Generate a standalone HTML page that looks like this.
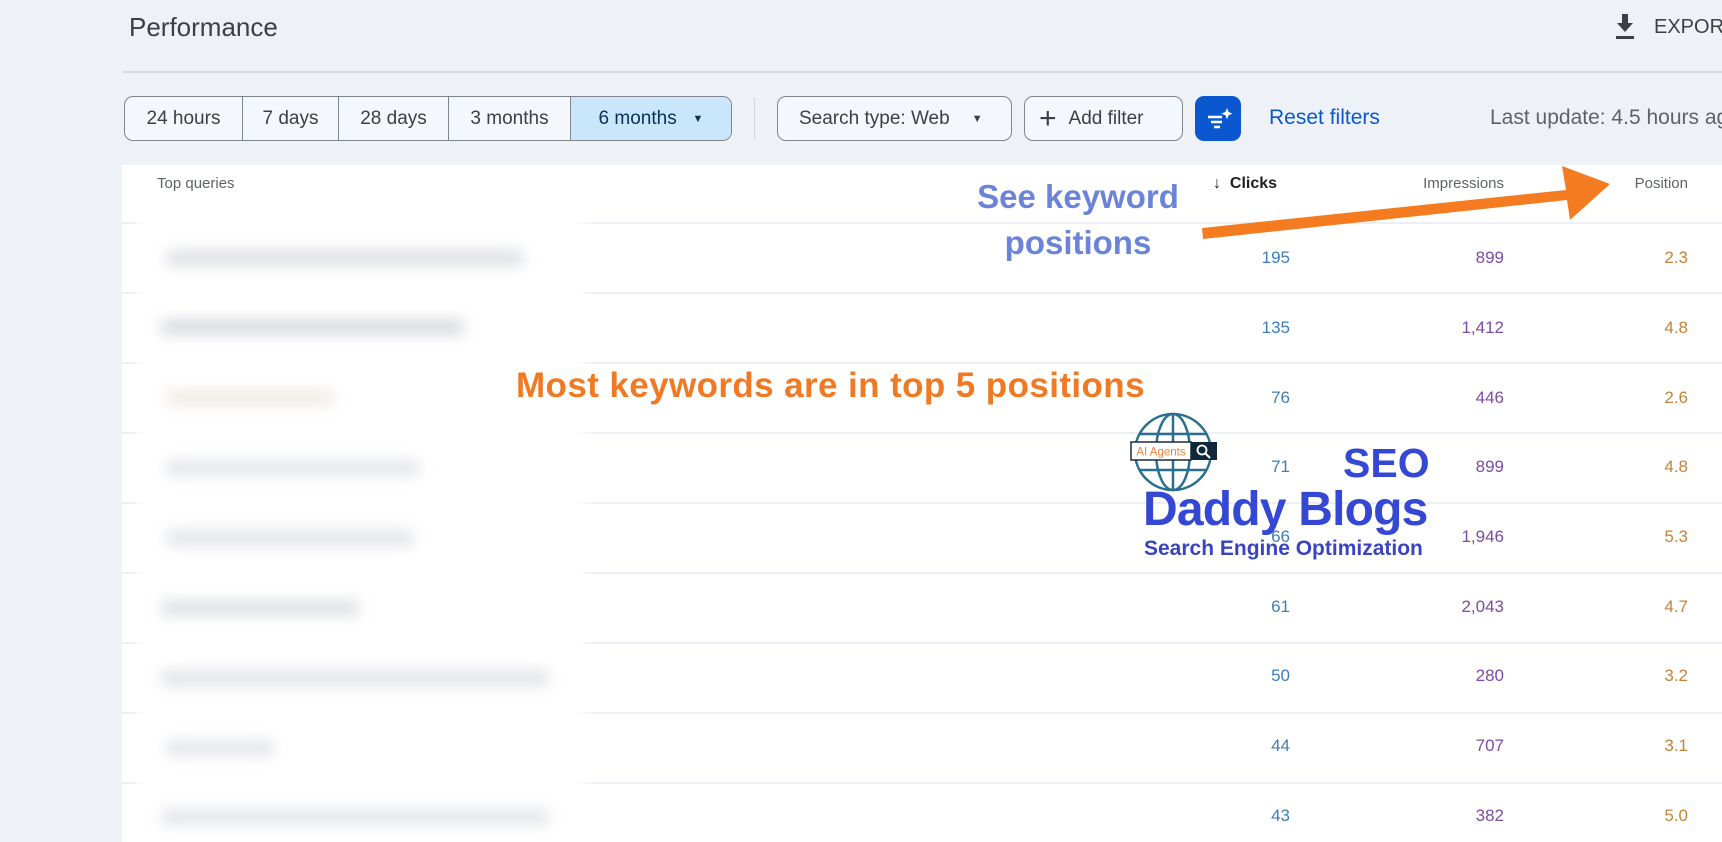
<!DOCTYPE html>
<html><head><meta charset="utf-8">
<style>
*{margin:0;padding:0;box-sizing:border-box}
body{width:1722px;height:842px;overflow:hidden;background:#eef2f7;font-family:"Liberation Sans",Arial,sans-serif;position:relative;color:#3c4043}
.abs{position:absolute}
.title{left:129px;top:12px;font-size:26px;color:#3c4043}
.div{left:123px;top:71px;right:0;height:2px;background:#d6dbe2}
.seg{left:124px;top:96px;height:45px;display:flex;border:1px solid #80868b;border-radius:9px;overflow:hidden;background:#f4f7fb}
.seg div{height:100%;display:flex;align-items:center;justify-content:center;font-size:19px;color:#3c4043;border-right:1px solid #80868b}
.seg div:last-child{border-right:none;background:#c9e6fb;color:#0b2f55}
.btn{top:96px;height:45px;border:1px solid #80868b;border-radius:9px;display:flex;align-items:center;font-size:19px;color:#3c4043;background:#f4f7fb}
.table{left:122px;top:165px;right:0;bottom:0;background:#fff}
.line{height:2px;background:#eceff3;left:122px;right:0}
.hdr{font-size:15px;color:#5f6368;top:174px}
.num{font-size:17px;text-align:right}
.c{color:#3d7dbd}.i{color:#7e4aa6}.p{color:#c8813a}
.blur{filter:blur(7px);background:#c9ccd3;height:16px;border-radius:8px}
</style></head><body>
<div class="abs title">Performance</div>
<div class="abs" style="left:1614px;top:14px;width:22px;height:26px">
<svg width="22" height="26" viewBox="0 0 22 26"><path d="M8 0h6v9h5l-8 9-8-9h5z" fill="#3c4043"/><rect x="2" y="22" width="18" height="3" fill="#3c4043"/></svg></div>
<div class="abs" style="left:1654px;top:16px;font-size:20px;color:#3c4043">EXPORT</div>
<div class="abs div"></div>
<div class="abs seg">
<div style="width:118px">24 hours</div><div style="width:96px">7 days</div><div style="width:110px">28 days</div><div style="width:122px">3 months</div><div style="width:160px">6 months&nbsp;&nbsp;&nbsp;<span style="font-size:11px">▼</span></div>
</div>
<div class="abs" style="left:754px;top:98px;width:1px;height:42px;background:#d0d5dc"></div>
<div class="abs btn" style="left:777px;width:235px;padding-left:21px">Search type: Web<span style="font-size:11px;margin-left:22px">▼</span></div>
<div class="abs btn" style="left:1024px;width:159px;padding-left:14px"><span style="font-size:30px;font-weight:300;margin-right:12px;line-height:1">+</span>Add filter</div>
<div class="abs" style="left:1195px;top:96px;width:46px;height:45px;background:#0b57d0;border-radius:9px">
<svg width="46" height="45" viewBox="0 0 46 45"><g stroke="#fff" stroke-width="2.6"><path d="M13 21h14M16 26h11M19 31h6"/></g><path d="M32 12l1.6 4 4 1.6-4 1.6-1.6 4-1.6-4-4-1.6 4-1.6z" fill="#fff"/></svg></div>
<div class="abs" style="left:1269px;top:106px;font-size:21px;color:#0b57d0">Reset filters</div>
<div class="abs" style="left:1490px;top:106px;font-size:21px;color:#5f6368;white-space:nowrap">Last update: 4.5 hours ago</div>

<div class="abs table"></div>
<div class="abs hdr" style="left:157px;top:175px">Top queries</div>
<div class="abs hdr" style="left:1213px;top:175px;color:#202124;font-weight:bold;font-size:16px">↓&nbsp; Clicks</div>
<div class="abs hdr" style="left:1404px;top:175px;width:100px;text-align:right">Impressions</div>
<div class="abs hdr" style="left:1588px;top:175px;width:100px;text-align:right">Position</div>
<div class="abs line" style="top:222px"></div>
<div class="abs line" style="top:292px"></div>
<div class="abs line" style="top:362px"></div>
<div class="abs line" style="top:432px"></div>
<div class="abs line" style="top:502px"></div>
<div class="abs line" style="top:572px"></div>
<div class="abs line" style="top:642px"></div>
<div class="abs line" style="top:712px"></div>
<div class="abs line" style="top:782px"></div>
<div class="abs" style="left:145px;top:218px;width:432px;height:624px;background:#fff;box-shadow:0 0 12px 8px #fff"></div>
<div class="abs blur" style="left:165px;top:250px;width:360px;opacity:.6"></div>
<div class="abs blur" style="left:160px;top:319px;width:305px;opacity:.7"></div>
<div class="abs blur" style="left:165px;top:390px;width:170px;opacity:.45;background:#dcd5c2"></div>
<div class="abs blur" style="left:165px;top:460px;width:255px;opacity:.5"></div>
<div class="abs blur" style="left:165px;top:530px;width:250px;opacity:.5"></div>
<div class="abs blur" style="left:160px;top:600px;width:200px;opacity:.6"></div>
<div class="abs blur" style="left:160px;top:670px;width:390px;opacity:.55"></div>
<div class="abs blur" style="left:165px;top:740px;width:110px;opacity:.5"></div>
<div class="abs blur" style="left:160px;top:809px;width:390px;opacity:.5"></div>

<div class="abs" style="left:1190px;top:248px;width:100px">
<div class="num c" style="height:70px">195</div><div class="num c" style="height:70px">135</div><div class="num c" style="height:69px">76</div><div class="num c" style="height:70px">71</div><div class="num c" style="height:70px">66</div><div class="num c" style="height:69px">61</div><div class="num c" style="height:70px">50</div><div class="num c" style="height:70px">44</div><div class="num c">43</div></div>
<div class="abs" style="left:1404px;top:248px;width:100px">
<div class="num i" style="height:70px">899</div><div class="num i" style="height:70px">1,412</div><div class="num i" style="height:69px">446</div><div class="num i" style="height:70px">899</div><div class="num i" style="height:70px">1,946</div><div class="num i" style="height:69px">2,043</div><div class="num i" style="height:70px">280</div><div class="num i" style="height:70px">707</div><div class="num i">382</div></div>
<div class="abs" style="left:1588px;top:248px;width:100px">
<div class="num p" style="height:70px">2.3</div><div class="num p" style="height:70px">4.8</div><div class="num p" style="height:69px">2.6</div><div class="num p" style="height:70px">4.8</div><div class="num p" style="height:70px">5.3</div><div class="num p" style="height:69px">4.7</div><div class="num p" style="height:70px">3.2</div><div class="num p" style="height:70px">3.1</div><div class="num p">5.0</div></div>

<div class="abs" style="left:960px;top:174px;width:236px;text-align:center;font-size:33px;font-weight:bold;color:#6b83d9;line-height:46px">See keyword<br>positions</div>
<svg class="abs" style="left:0;top:0" width="1722" height="842"><path d="M1202 228 L1566 190 L1562 166 L1610 184 L1570 220 L1567 200 L1203 239 Z" fill="#f47b20"/></svg>
<div class="abs" style="left:516px;top:366px;font-size:35px;font-weight:bold;color:#f07a24;white-space:nowrap;letter-spacing:0.4px">Most keywords are in top 5 positions</div>

<svg class="abs" style="left:1128px;top:410px" width="96" height="84" viewBox="0 0 96 84">
<g fill="none" stroke="#2a6f8f" stroke-width="2.5"><circle cx="45" cy="42" r="38"/><ellipse cx="45" cy="42" rx="17" ry="38"/><path d="M45 4v76M7 42h76M12 24h66M12 60h66"/></g>
<rect x="3" y="32" width="60" height="18" fill="#fff" stroke="#1a2a3a" stroke-width="1.5"/>
<rect x="63" y="32" width="26" height="18" fill="#10263a"/>
<circle cx="74" cy="40" r="4.5" fill="none" stroke="#fff" stroke-width="1.8"/><path d="M77 43l5 5" stroke="#fff" stroke-width="2"/>
<text x="33" y="45.5" text-anchor="middle" font-family="Liberation Sans" font-size="11.5" fill="#e8833a">AI Agents</text></svg>
<div class="abs" style="left:1343px;top:440px;font-size:41px;font-weight:bold;color:#3548d4">SEO</div>
<div class="abs" style="left:1143px;top:482px;font-size:48px;font-weight:bold;color:#3548d4;letter-spacing:-0.8px;white-space:nowrap">Daddy Blogs</div>
<div class="abs" style="left:1144px;top:537px;font-size:21px;font-weight:bold;color:#3a44c0;white-space:nowrap">Search Engine Optimization</div>
</body></html>
